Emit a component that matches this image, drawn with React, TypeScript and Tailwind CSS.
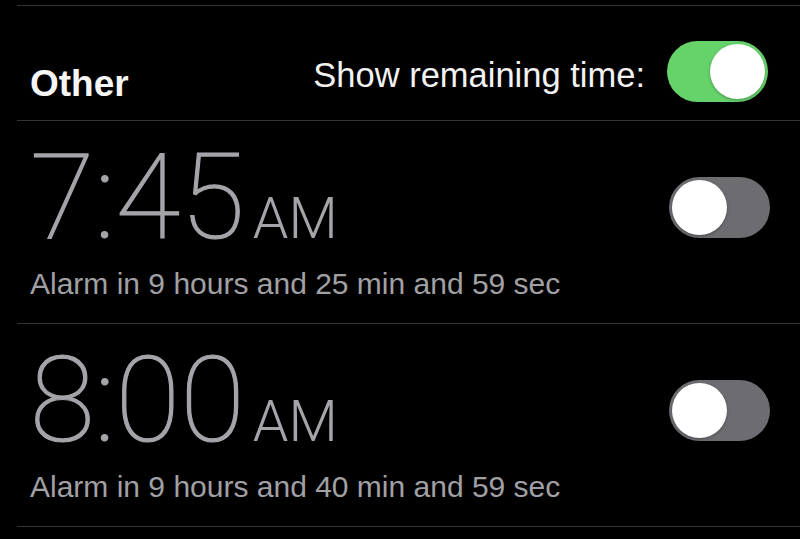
import { useState } from "react";

interface Alarm {
    id: number;
    time: string;
    remaining: string;
    enabled: boolean;
}

const initialAlarms: Alarm[] = [
    { id: 1, time: "7:45", remaining: "Alarm in 9 hours and 25 min and 59 sec", enabled: false },
    { id: 2, time: "8:00", remaining: "Alarm in 9 hours and 40 min and 59 sec", enabled: false },
];

const Toggle = ({ on, onClick }: { on: boolean; onClick: () => void }) => (
    <button
        onClick={onClick}
        className={
            on
                ? "flex w-[101px] h-[61px] shrink-0 items-center justify-end rounded-full bg-[#65d26a] px-[3px]"
                : "flex w-[101px] h-[61px] shrink-0 items-center justify-start rounded-full bg-[#6c6c71] px-[3px]"
        }
    >
        <span className="block w-[55px] h-[55px] rounded-full bg-white shadow-[0_1px_3px_rgba(0,0,0,0.3)]" />
    </button>
);

const App = () => {
    const [showRemaining, setShowRemaining] = useState(true);
    const [alarms, setAlarms] = useState(initialAlarms);

    const toggleAlarm = (id: number) => {
        setAlarms((prev) => prev.map((a) => (a.id === id ? { ...a, enabled: !a.enabled } : a)));
    };

    return (
        <div className="w-full h-[539px] overflow-hidden bg-black pt-[5px] pl-[17px] font-['Liberation_Sans',Arial,sans-serif]">
            <div className="border-t border-[#343436] h-[115px] flex items-start justify-between pl-[13px] pr-[32px]">
                <h2 className="mt-[58px] text-[37px] leading-[40px] font-bold text-[#f5f5f5]">Other</h2>
                <div className="flex items-start">
                    <span className="mt-[49px] text-[34.5px] leading-[40px] text-[#f2f2f2]">Show remaining time:</span>
                    <div className="mt-[35px] ml-[22px]">
                        <Toggle on={showRemaining} onClick={() => setShowRemaining(!showRemaining)} />
                    </div>
                </div>
            </div>

            {alarms.map((alarm) => (
                <div
                    key={alarm.id}
                    className="border-t border-[#343436] h-[203px] flex items-start justify-between pl-[13px] pr-[30px]"
                >
                    <div className="flex flex-col">
                        <div className="mt-[18px] flex items-baseline text-[#a4a4a9] font-['Roboto',sans-serif]">
                            <span className="text-[118px] leading-none font-thin [-webkit-text-stroke:1.2px_#a4a4a9]">
                                {alarm.time}
                            </span>
                            <span className="ml-[8px] text-[57px] leading-none font-light">AM</span>
                        </div>
                        <p className="mt-[9px] text-[30px] leading-[36px] text-[#a0a0a5]">{alarm.remaining}</p>
                    </div>
                    <div className="mt-[56px]">
                        <Toggle on={alarm.enabled} onClick={() => toggleAlarm(alarm.id)} />
                    </div>
                </div>
            ))}
            <div className="border-t border-[#343436]" />
        </div>
    );
};

export default App;
